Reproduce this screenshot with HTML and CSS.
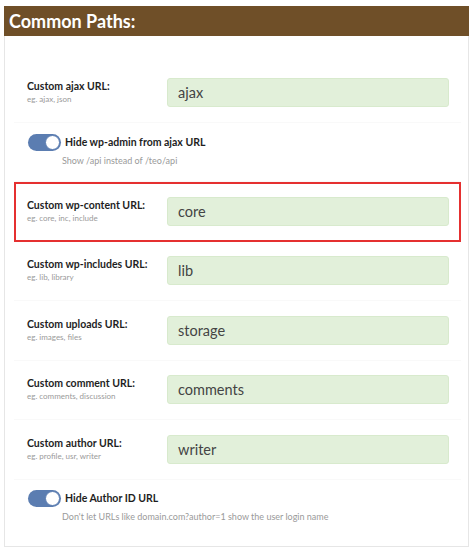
FILE: index.html
```html
<!DOCTYPE html>
<html>
<head>
<meta charset="utf-8">
<link rel="stylesheet" href="styles.css">
</head>
<body>
<div class="card">
  <div class="card-head">Common Paths:</div>
  <div class="card-body">
    <div class="row">
      <div class="lbl"><div class="lbl-title">Custom ajax URL:</div><div class="lbl-sub">eg. ajax, json</div></div>
      <div class="field">ajax</div>
    </div>
    <div class="trow">
      <div class="tline"><span class="toggle"><span class="knob"></span></span><span class="tlabel">Hide wp-admin from ajax URL</span></div>
      <div class="tsub">Show /api instead of /teo/api</div>
    </div>
    <div class="row hl">
      <div class="lbl"><div class="lbl-title">Custom wp-content URL:</div><div class="lbl-sub">eg. core, inc, include</div></div>
      <div class="field">core</div>
    </div>
    <div class="row">
      <div class="lbl"><div class="lbl-title">Custom wp-includes URL:</div><div class="lbl-sub">eg. lib, library</div></div>
      <div class="field">lib</div>
    </div>
    <div class="row">
      <div class="lbl"><div class="lbl-title">Custom uploads URL:</div><div class="lbl-sub">eg. images, files</div></div>
      <div class="field">storage</div>
    </div>
    <div class="row">
      <div class="lbl"><div class="lbl-title">Custom comment URL:</div><div class="lbl-sub">eg. comments, discussion</div></div>
      <div class="field">comments</div>
    </div>
    <div class="row">
      <div class="lbl"><div class="lbl-title">Custom author URL:</div><div class="lbl-sub">eg. profile, usr, writer</div></div>
      <div class="field">writer</div>
    </div>
    <div class="trow last">
      <div class="tline"><span class="toggle"><span class="knob"></span></span><span class="tlabel">Hide Author ID URL</span></div>
      <div class="tsub">Don't let URLs like domain.com?author=1 show the user login name</div>
    </div>
  </div>
</div>
</body>
</html>
```

FILE: styles.css
```css
* { box-sizing: border-box; }
html, body { margin: 0; padding: 0; background: #ffffff; }
body {
  font-family: Lato, "Open Sans", sans-serif;
  color: #222;
  padding: 6px 5px 0 4px;
}
.card {
  width: 465px;
  height: 541px;
  border: 1px solid #e6e6e6;
  border-top: none;
  background: #fff;
}
.card-head {
  height: 30px;
  background: #6f4f28;
  color: #fff;
  font-weight: 700;
  font-size: 18px;
  line-height: 30px;
  padding-left: 5px;
  margin: 0 -1px;
}
.card-body {
  padding: 27px 7px 0 9px;
}
.row {
  display: flex;
  align-items: center;
  padding: 14px 12px 14px 13px;
  border-bottom: 1px solid #f9f9f9;
  height: 59.5px;
}
.row.hl {
  border: 2px solid #e53030;
  padding-left: 11px;
  padding-right: 10px;
}
.lbl { width: 140px; flex: none; }
.lbl-title {
  font-weight: 700;
  font-size: 10.5px;
  line-height: 13px;
  color: #1e1e1e;
}
.lbl-sub {
  font-size: 8px;
  color: #9a9a9a;
  line-height: 11px;
  margin-top: 1px;
}
.field {
  flex: 1;
  height: 29px;
  background: #e2f0da;
  border: 1px solid #d8eacd;
  border-radius: 3px;
  font-size: 14.5px;
  color: #444;
  line-height: 27px;
  padding-left: 10px;
}
.trow {
  height: 59.5px;
  padding: 11px 0 0 14px;
  border-bottom: 1px solid #f9f9f9;
}
.trow.last { border-bottom: none; padding-top: 10px; }
.tline { display: flex; align-items: center; }
.toggle {
  position: relative;
  width: 33px;
  height: 17px;
  border-radius: 9px;
  background: #5b7db1;
  flex: none;
}
.knob {
  position: absolute;
  right: 1px;
  top: 1px;
  width: 15px;
  height: 15px;
  border-radius: 50%;
  background: #fff;
  border: 1px solid #5b7db1;
}
.tlabel {
  margin-left: 4px;
  font-weight: 700;
  font-size: 10.5px;
  color: #1e1e1e;
}
.tsub {
  margin: 4px 0 0 34px;
  font-size: 9px;
  color: #9a9a9a;
}
```
